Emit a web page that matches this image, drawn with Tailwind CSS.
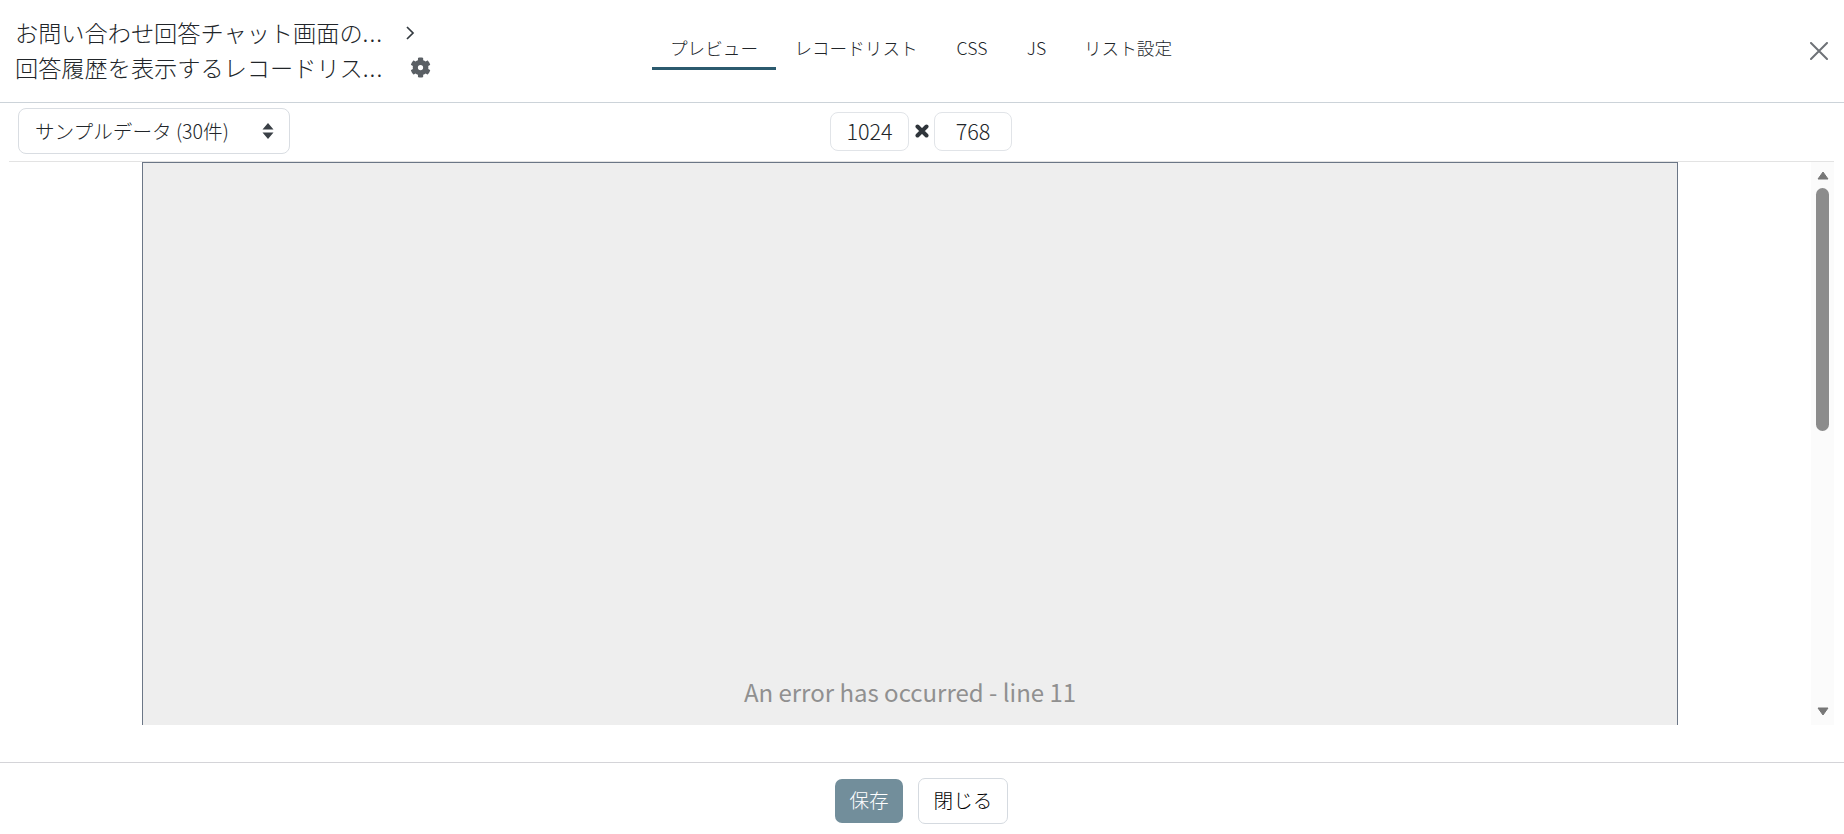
<!DOCTYPE html>
<html lang="ja">
  <head>
    <meta charset="UTF-8" />
    <title>リスト編集</title>
    <script src="https://cdn.jsdelivr.net/npm/@tailwindcss/browser@4"></script>
  </head>
  <body class="bg-white text-[#212529] font-['Noto_Sans_CJK_JP','Noto_Sans',sans-serif] font-light overflow-hidden">
    <div class="flex flex-col h-[834px] w-[1844px]">
      <!-- header -->
      <header class="flex h-[103px] border-b border-[#ccd3d9]">
        <div class="w-[652px] pl-[15px] pt-[15px]">
          <div class="flex items-center h-[35px]">
            <span class="w-[370px] whitespace-nowrap text-[23.2px] leading-[35px]">お問い合わせ回答チャット画面の<span class="tracking-[1px]">...</span></span>
            <svg class="ml-[19px] w-[12px] h-[16px]" viewBox="0 0 12 16" fill="none" stroke="#333a40" stroke-width="1.7"><path d="M3 2l6 6-6 6" /></svg>
          </div>
          <div class="flex items-center h-[35px]">
            <span class="w-[370px] whitespace-nowrap text-[23.2px] leading-[35px]">回答履歴を表示するレコードリス<span class="tracking-[1px]">...</span></span>
            <svg class="ml-[25px] w-[21px] h-[21px]" viewBox="0 0 512 512" fill="#5a5f64"><path d="M487 316l-42-25c4-23 4-47 0-70l42-25c5-3 7-9 5-14-11-35-30-67-54-93-4-4-10-5-15-2l-42 25c-18-15-38-27-60-35V28c0-6-4-11-9-12-37-8-74-8-109 0-5 1-9 6-9 12v49c-22 8-42 20-60 35L92 87c-5-3-11-2-15 2-24 26-43 58-54 93-2 5 0 11 5 14l42 25c-4 23-4 47 0 70l-42 25c-5 3-7 9-5 14 11 35 30 67 54 93 4 4 10 5 15 2l42-25c18 15 38 27 60 35v49c0 6 4 11 9 12 37 8 74 8 109 0 5-1 9-6 9-12v-49c22-8 42-20 60-35l42 25c5 3 11 2 15-2 24-26 43-58 54-93 2-5 0-11-5-14zM256 320a64 64 0 1 1 0-128 64 64 0 0 1 0 128z" /></svg>
          </div>
        </div>
        <nav class="flex text-[17.6px] h-[70px]">
          <a class="w-[124px] flex items-center justify-center pt-[29px] border-b-[3px] border-[#2b5a6e]">プレビュー</a>
          <a class="w-[160px] flex items-center justify-center pt-[29px] border-b-[3px] border-transparent">レコードリスト</a>
          <a class="w-[72px] flex items-center justify-center pt-[29px] border-b-[3px] border-transparent">CSS</a>
          <a class="w-[57px] flex items-center justify-center pt-[29px] border-b-[3px] border-transparent">JS</a>
          <a class="w-[126px] flex items-center justify-center pt-[29px] border-b-[3px] border-transparent">リスト設定</a>
        </nav>
        <div class="ml-auto pr-[16px] pt-[42px]">
          <svg class="w-[18px] h-[18px]" viewBox="0 0 18 18" stroke="#6e7277" stroke-width="2" stroke-linecap="round"><path d="M1 1l16 16M17 1L1 17" /></svg>
        </div>
      </header>

      <!-- toolbar -->
      <div class="flex items-center h-[59px] ml-[9px] mr-[10px] border-b border-[#e3e3e3] pb-[2px]">
        <div class="ml-[9px] flex items-center justify-between w-[272px] h-[46px] pl-[16px] pr-[15px] border border-[#d9dde2] rounded-[8px] text-[19.6px]">
          <span>サンプルデータ (30件)</span>
          <svg class="w-[12px] h-[16px]" viewBox="0 0 12 16" fill="#3a4046"><path d="M6 0l5.500 6.500H.5zM6 16L.5 9.500h11z" /></svg>
        </div>
        <div class="ml-[540px] flex items-center">
          <div class="flex items-center justify-center w-[79px] h-[39px] border border-[#e1e4e8] rounded-[8px] text-[21.6px]">1024</div>
          <svg class="ml-[6px] mr-[5px] w-[14px] h-[14px]" viewBox="0 0 14 14" stroke="#2f353b" stroke-width="4" stroke-linecap="round"><path d="M2.500 2.500l9 9M11.500 2.500l-9 9" /></svg>
          <div class="flex items-center justify-center w-[78px] h-[39px] border border-[#e1e4e8] rounded-[8px] text-[21.6px]">768</div>
        </div>
      </div>

      <!-- preview -->
      <div class="flex h-[563px] ml-[9px] mr-[10px]">
        <div class="flex-1 overflow-hidden pl-[133px]">
          <div class="flex flex-col justify-end items-center w-[1536px] h-[563px] pb-[15px] bg-[#eeeeee] border-x border-t border-[#6b7686] font-normal text-[24px] leading-[36px] text-[#909090]">
            An error has occurred - line 11
          </div>
        </div>
        <div class="flex flex-col items-center w-[23px] bg-[#fbfbfb] pt-[9px] pb-[9px]">
          <svg class="w-[12px] h-[9px]" viewBox="0 0 12 9" fill="#777" stroke="#777" stroke-width="1" stroke-linejoin="round"><path d="M6 1l5 7H1z" /></svg>
          <div class="w-[13px] h-[243px] mt-[8px] rounded-full bg-[#8c8c8c]"></div>
          <svg class="mt-auto w-[12px] h-[9px]" viewBox="0 0 12 9" fill="#777" stroke="#777" stroke-width="1" stroke-linejoin="round"><path d="M1 1h10L6 8z" /></svg>
        </div>
      </div>

      <!-- footer -->
      <footer class="mt-[37px] flex-1 flex items-center justify-center gap-[15px] border-t border-[#d4d4d8] pt-[5px] pr-[1px]">
        <button class="w-[68px] h-[44px] pb-[3px] rounded-[7px] bg-[#728e9b] text-white text-[19.6px]">保存</button>
        <button class="w-[90px] h-[46px] pb-[3px] rounded-[7px] bg-white border border-[#d5dae0] text-black text-[19.6px]">閉じる</button>
      </footer>
    </div>
  </body>
</html>
